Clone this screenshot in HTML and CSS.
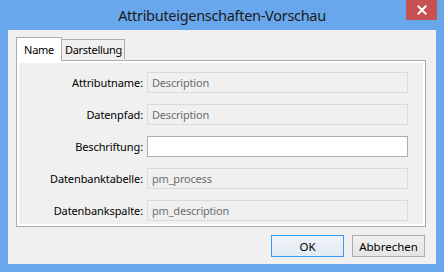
FILE: index.html
```html
<!DOCTYPE html>
<html lang="de">
<head>
<meta charset="utf-8">
<title>Attributeigenschaften-Vorschau</title>
<link rel="stylesheet" href="styles.css">
</head>
<body>
<div class="window">
  <div class="titlebar">
    <div class="title">Attributeigenschaften-Vorschau</div>
    <div class="close">
      <svg width="10" height="10" viewBox="0 0 10 10"><path d="M1.5 1.5 L8.5 8.5 M8.5 1.5 L1.5 8.5" stroke="#fff" stroke-width="2" stroke-linecap="square"/></svg>
    </div>
  </div>
  <div class="client">
    <div class="tabs">
      <div class="tab active">Name</div>
      <div class="tab">Darstellung</div>
    </div>
    <div class="panel">
      <div class="page">
        <label class="lbl">Attributname:</label>
        <div class="field disabled">Description</div>
        <label class="lbl">Datenpfad:</label>
        <div class="field disabled">Description</div>
        <label class="lbl">Beschriftung:</label>
        <div class="field editable"></div>
        <label class="lbl">Datenbanktabelle:</label>
        <div class="field disabled">pm_process</div>
        <label class="lbl">Datenbankspalte:</label>
        <div class="field disabled">pm_description</div>
      </div>
    </div>
    <div class="buttons">
      <button class="btn default">OK</button>
      <button class="btn">Abbrechen</button>
    </div>
  </div>
</div>
</body>
</html>
```
FILE: styles.css
```css
html, body {
  margin: 0;
  padding: 0;
}
body {
  width: 444px;
  height: 272px;
  overflow: hidden;
  font-family: "Noto Sans", "Open Sans", sans-serif;
}
.window {
  width: 444px;
  height: 272px;
  box-sizing: border-box;
  background: #69a7ec;
  display: flex;
  flex-direction: column;
}
.titlebar {
  height: 30px;
  position: relative;
  display: flex;
  align-items: center;
  justify-content: center;
}
.title {
  font-size: 14.5px;
  color: #1a1a1a;
  letter-spacing: -0.3px;
  margin-top: -1px;
}
.close {
  position: absolute;
  top: 0;
  right: 7px;
  width: 31px;
  height: 20px;
  background: #c75050;
  display: flex;
  align-items: center;
  justify-content: center;
}
.client {
  margin: 0 8px 8px 8px;
  height: 234px;
  background: #f0f0f0;
  box-sizing: border-box;
  padding: 8px 10px 0 8px;
  display: flex;
  flex-direction: column;
}
.tabs {
  display: flex;
  align-items: flex-end;
  height: 22px;
  position: relative;
  z-index: 1;
}
.tab {
  box-sizing: border-box;
  height: 20px;
  border: 1px solid #acacac;
  border-bottom: none;
  background: #f0f0f0;
  font-size: 11px;
  letter-spacing: -0.3px;
  color: #000;
  display: flex;
  align-items: center;
  padding: 0 2px 1px 3px;
  margin-bottom: 1px;
}
.tab.active {
  height: 24px;
  width: 46px;
  justify-content: center;
  background: #fff;
  margin-bottom: -1px;
  padding: 0 0 1px 0;
  margin-right: -1px;
}
.panel {
  height: 167px;
  box-sizing: border-box;
  border: 1px solid #acacac;
  background: #fff;
  padding: 2px;
}
.page {
  height: 100%;
  background: #f0f0f0;
  box-sizing: border-box;
  padding-top: 9px;
  display: grid;
  grid-template-columns: 124px 261px;
  grid-auto-rows: 21px;
  column-gap: 4px;
  row-gap: 11px;
  align-content: start;
}
.lbl {
  font-size: 11px;
  letter-spacing: -0.1px;
  color: #000;
  text-align: right;
  align-self: center;
  white-space: nowrap;
}
.field {
  box-sizing: border-box;
  height: 21px;
  font-size: 11px;
  letter-spacing: -0.2px;
  padding-left: 4px;
  display: flex;
  align-items: center;
}
.field.disabled {
  border: 1px solid #dadada;
  background: #f0f0f0;
  color: #6d6d6d;
}
.field.editable {
  border: 1px solid #abadb3;
  background: #fff;
}
.buttons {
  display: flex;
  justify-content: flex-end;
  gap: 8px;
  margin-top: 8px;
  padding-right: 1px;
}
.btn {
  width: 73px;
  height: 22px;
  box-sizing: border-box;
  border: 1px solid #acacac;
  background: linear-gradient(#f0f0f0, #e5e5e5);
  font-family: "Noto Sans", "Open Sans", sans-serif;
  font-size: 11.5px;
  color: #000;
  padding: 0;
}
.btn.default {
  border-color: #3399ff;
  background: linear-gradient(#eef3f8, #e3ebf3);
}
```
